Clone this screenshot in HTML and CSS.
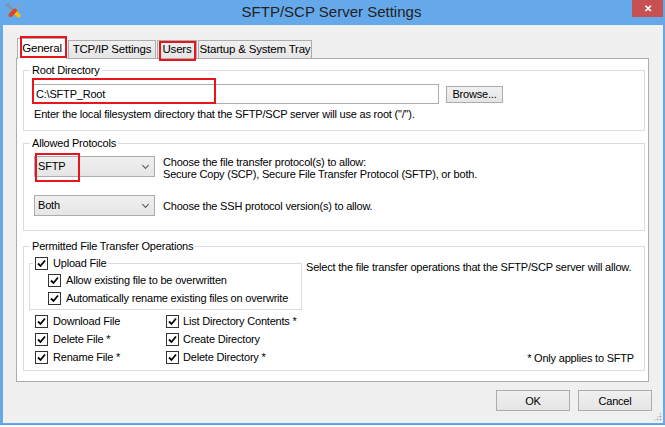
FILE: index.html
```html
<!DOCTYPE html>
<html lang="en">
<head>
    <meta charset="UTF-8">
    <title>SFTP/SCP Server Settings</title>
    <link rel="stylesheet" href="styles.css">
</head>
<body>
    <div class="window">
        <div class="titlebar">
            <svg class="app-icon" width="18" height="16" viewBox="0 0 18 16">
                <!-- wrench -->
                <path d="M2 2 L9 9" stroke="#8a8f99" stroke-width="2.4" stroke-linecap="round"/>
                <path d="M0.8 3.5 A2.6 2.6 0 0 1 3.5 0.8" stroke="#8a8f99" stroke-width="1.6" fill="none"/>
                <path d="M9 9 L12.5 12.5" stroke="#f6c000" stroke-width="4" stroke-linecap="round"/>
                <!-- screwdriver -->
                <path d="M15 1.5 L9.5 7" stroke="#9aa0aa" stroke-width="1.6" stroke-linecap="round"/>
                <path d="M9 7.5 L4.5 12" stroke="#d8442c" stroke-width="4" stroke-linecap="round"/>
            </svg>
            <div class="title">SFTP/SCP Server Settings</div>
            <div class="close">&#x2715;</div>
        </div>

        <div class="client">
            <div class="tabs">
                <div class="tab active tab-general">General</div>
                <div class="tab tab-tcp">TCP/IP Settings</div>
                <div class="tab tab-users">Users</div>
                <div class="tab tab-startup">Startup &amp; System Tray</div>
            </div>

            <div class="panel">
                <fieldset class="group group-root">
                    <legend>Root Directory</legend>
                    <div class="row">
                        <div class="textbox">C:\SFTP_Root</div>
                        <div class="button browse">Browse...</div>
                    </div>
                    <p class="hint">Enter the local filesystem directory that the SFTP/SCP server will use as root ("/").</p>
                </fieldset>

                <fieldset class="group group-protocols">
                    <legend>Allowed Protocols</legend>
                    <div class="proto-row">
                        <div class="select">SFTP<span class="chev"></span></div>
                        <p class="proto-text">Choose the file transfer protocol(s) to allow:<br>Secure Copy (SCP), Secure File Transfer Protocol (SFTP), or both.</p>
                    </div>
                    <div class="proto-row second">
                        <div class="select">Both<span class="chev"></span></div>
                        <p class="proto-text single">Choose the SSH protocol version(s) to allow.</p>
                    </div>
                </fieldset>

                <fieldset class="group group-ops">
                    <legend>Permitted File Transfer Operations</legend>
                    <div class="upload-row">
                        <fieldset class="subgroup">
                            <legend><span class="check"></span>Upload File</legend>
                            <div class="opt"><span class="check"></span>Allow existing file to be overwritten</div>
                            <div class="opt"><span class="check"></span>Automatically rename existing files on overwrite</div>
                        </fieldset>
                        <p class="ops-text">Select the file transfer operations that the SFTP/SCP server will allow.</p>
                    </div>
                    <div class="ops-bottom">
                        <div class="ops-grid">
                            <div class="opt"><span class="check"></span>Download File</div>
                            <div class="opt"><span class="check"></span>List Directory Contents *</div>
                            <div class="opt"><span class="check"></span>Delete File *</div>
                            <div class="opt"><span class="check"></span>Create Directory</div>
                            <div class="opt"><span class="check"></span>Rename File *</div>
                            <div class="opt"><span class="check"></span>Delete Directory *</div>
                        </div>
                        <p class="note">* Only applies to SFTP</p>
                    </div>
                </fieldset>
            </div>

            <div class="actions">
                <div class="button">OK</div>
                <div class="button">Cancel</div>
            </div>
        </div>

        <!-- annotation boxes drawn over the dialog -->
        <div class="mark mark-general"></div>
        <div class="mark mark-users"></div>
        <div class="mark mark-root"></div>
        <div class="mark mark-sftp"></div>
        <div class="grip"></div>
    </div>
</body>
</html>
```

FILE: styles.css
```css
* {
    margin: 0;
    padding: 0;
    box-sizing: border-box;
}

body {
    width: 665px;
    height: 427px;
    background: #fff;
    font-family: 'Liberation Sans', Arial, sans-serif;
    font-size: 11px;
    letter-spacing: -0.2px;
    color: #000;
    overflow: hidden;
}

.window {
    position: relative;
    width: 665px;
    height: 425px;
    display: flex;
    flex-direction: column;
    background: #65a9eb;
    padding: 0 2px 1px 3px;
    border-bottom: 1px solid #5b9fe2;
}

.titlebar {
    position: relative;
    height: 25px;
    flex-shrink: 0;
    display: flex;
    align-items: center;
    justify-content: center;
}

.app-icon {
    position: absolute;
    left: 3px;
    top: 3px;
}

.title {
    font-size: 15px;
    letter-spacing: 0;
    color: #222;
    margin-top: -2px;
    margin-right: 3px;
}

.close {
    position: absolute;
    right: 0;
    top: 0;
    width: 31px;
    height: 17px;
    background: #c75050;
    color: #fff;
    font-size: 10px;
    font-weight: bold;
    letter-spacing: 0;
    display: flex;
    align-items: center;
    justify-content: center;
}

.client {
    flex: 1;
    background: #f0f0f0;
    padding: 13px 0 0 13px;
}

/* tabs */
.tabs {
    display: flex;
    height: 20px;
    padding-left: 1px;
    gap: 1px;
    position: relative;
    z-index: 1;
    font-size: 11.5px;
}

.tab {
    height: 18px;
    margin-top: 2px;
    border: 1px solid #acacac;
    border-bottom: none;
    background: linear-gradient(#f0f0f0, #e5e5e5);
    display: flex;
    align-items: center;
    justify-content: center;
    padding-bottom: 1px;
}

.tab.active {
    height: 21px;
    margin-top: 0;
    background: #fff;
    padding-bottom: 2px;
}

.tab-general { width: 50px; }
.tab-tcp { width: 88px; }
.tab-users { width: 40px; }
.tab-startup { width: 114px; }

.panel {
    width: 633px;
    height: 324px;
    background: #fff;
    border: 1px solid #adadad;
    padding: 4px 3px 0 6px;
}

/* group boxes */
.group {
    border: 1px solid #dcdcdc;
    border-radius: 0;
}

.group > legend {
    padding: 0 2px;
    line-height: 14px;
}

.group-root {
    padding: 7px 8px 9px 8px;
}

.group-root > legend { margin-left: -2px; }

.row {
    display: flex;
    align-items: center;
}

.textbox {
    width: 407px;
    height: 20px;
    border: 1px solid #abadb3;
    background: #fff;
    padding: 0 3px;
    line-height: 18px;
}

.browse {
    margin-left: 7px;
    width: 57px;
    height: 17px;
}

.hint {
    margin-top: 3px;
    margin-left: 2px;
    line-height: 14px;
}

.group-protocols {
    margin-top: 5px;
    padding: 6px 10px 14px 10px;
}

.group-protocols > legend { margin-left: -4px; }

.proto-row {
    display: flex;
    align-items: flex-start;
}

.proto-row.second {
    margin-top: 15px;
    align-items: center;
}

.select {
    position: relative;
    width: 121px;
    height: 21px;
    border: 1px solid #acacac;
    background: linear-gradient(#f0f0f0, #e5e5e5);
    padding-left: 3px;
    line-height: 19px;
    flex-shrink: 0;
}

.chev {
    position: absolute;
    right: 6px;
    top: 6px;
    width: 5px;
    height: 5px;
    border-right: 1.5px solid #555;
    border-bottom: 1.5px solid #555;
    transform: rotate(45deg);
}

.proto-text {
    margin-left: 8px;
    margin-top: 0;
    line-height: 12px;
}

.proto-text.single {
    margin-top: 0;
    line-height: 14px;
}

.group-ops {
    margin-top: 8px;
    padding: 3px 10px 4px 5px;
}

.group-ops > legend { margin-left: 1px; }

.upload-row {
    display: flex;
    align-items: flex-start;
}

.subgroup {
    width: 273px;
    border: 1px solid #dcdcdc;
    padding: 1px 0 2px 18px;
}

.subgroup > legend {
    margin-left: -15px;
    padding: 0 2px;
    line-height: 14px;
    display: flex;
    align-items: center;
}

.ops-text {
    margin-top: 4px;
    margin-left: 4px;
    line-height: 14px;
}

.opt {
    height: 18px;
    display: flex;
    align-items: center;
    white-space: nowrap;
}

.check {
    width: 13px;
    height: 13px;
    border: 1px solid #333;
    background: #fff url("data:image/svg+xml,%3Csvg xmlns='http://www.w3.org/2000/svg' width='11' height='11'%3E%3Cpath d='M2 5.5 L4.5 8 L9 2.5' stroke='%23000' stroke-width='1.8' fill='none'/%3E%3C/svg%3E") no-repeat center;
    margin-right: 5px;
    flex-shrink: 0;
}

.ops-bottom {
    display: flex;
    justify-content: space-between;
    align-items: flex-end;
    margin-top: 2px;
}

.ops-grid {
    display: grid;
    grid-template-columns: 131px auto;
    padding-left: 6px;
}

.ops-grid .opt:nth-child(2n) .check {
    margin-right: 4px;
}

.note {
    line-height: 14px;
    margin-bottom: 1px;
}

/* buttons */
.button {
    border: 1px solid #acacac;
    background: linear-gradient(#f0f0f0, #e5e5e5);
    display: flex;
    align-items: center;
    justify-content: center;
}

.actions {
    width: 636px;
    display: flex;
    justify-content: flex-end;
    gap: 8px;
    margin-top: 8px;
}

.actions .button {
    width: 74px;
    height: 21px;
}

/* red annotation boxes */
.mark {
    position: absolute;
    border: 2px solid #e8141e;
    z-index: 5;
}

.mark-general { left: 20px; top: 36px; width: 47px; height: 22px; }
.mark-users { left: 159px; top: 41px; width: 37px; height: 20px; }
.mark-root { left: 32px; top: 78px; width: 184px; height: 26px; }
.mark-sftp { left: 35px; top: 153px; width: 45px; height: 29px; }

.grip {
    position: absolute;
    right: 3px;
    bottom: 3px;
    width: 9px;
    height: 9px;
    background: radial-gradient(circle, #a0a0a0 0.8px, transparent 1.1px) 0 0 / 3px 3px;
    clip-path: polygon(100% 0, 100% 100%, 0 100%);
}
```
